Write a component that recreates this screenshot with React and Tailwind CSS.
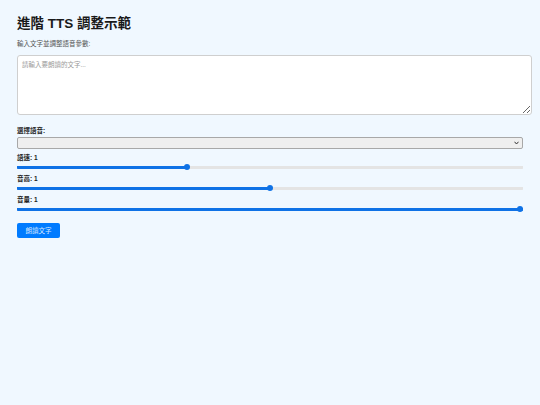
import React, { useState } from "react";

// Slider row: label + styled range input
const Slider = ({ label, value, min, max, step, onChange }) => {
  const pct = ((value - min) / (max - min)) * 100;
  return (
    <>
      <label className="mt-[4px] block text-[6.5px] font-bold leading-[10px] text-[#222]">
        {label}: {value}
      </label>
      <input
        type="range"
        min={min}
        max={max}
        step={step}
        value={value}
        onChange={(e) => onChange(Number(e.target.value))}
        className="mt-[1px] block h-[6px] w-[506px] cursor-pointer appearance-none bg-transparent [&::-webkit-slider-runnable-track]:h-[3px] [&::-webkit-slider-runnable-track]:rounded-full [&::-webkit-slider-thumb]:mt-[-1.5px] [&::-webkit-slider-thumb]:h-[6px] [&::-webkit-slider-thumb]:w-[6px] [&::-webkit-slider-thumb]:appearance-none [&::-webkit-slider-thumb]:rounded-full [&::-webkit-slider-thumb]:bg-[#0f72e6]"
        style={{
          background: `linear-gradient(to right, #0f72e6 0%, #0f72e6 ${pct}%, #e4e4e4 ${pct}%, #e4e4e4 100%)`,
          backgroundSize: "100% 3px",
          backgroundPosition: "center",
          backgroundRepeat: "no-repeat",
          borderRadius: "2px",
        }}
      />
    </>
  );
};

const App = () => {
  const [text, setText] = useState("");
  const [rate, setRate] = useState(1);
  const [pitch, setPitch] = useState(1);
  const [volume, setVolume] = useState(1);

  return (
    <div className="min-h-screen bg-[#f0f8ff] px-[17px] pt-[14px] font-['Liberation_Sans','Noto_Sans_CJK_TC',sans-serif]">
      <h1 className="text-[13.5px] font-bold leading-[20px] text-[#1a1a1a]">進階 TTS 調整示範</h1>
      <p className="mt-[5px] text-[6.5px] leading-[10px] text-[#555]">輸入文字並調整語音參數:</p>

      <textarea
        value={text}
        onChange={(e) => setText(e.target.value)}
        placeholder="請輸入要朗讀的文字..."
        className="mt-[6px] block h-[60px] w-[515px] resize-y rounded-[3px] border border-[#cfcfcf] bg-white px-[4px] py-[4px] text-[6.5px] leading-[9px] placeholder:text-[#9a9a9a] focus:outline-none"
      />

      <label className="mt-[11px] block text-[6.5px] font-bold leading-[10px] text-[#222]">選擇語音:</label>
      <div className="relative mt-[1px] w-[506px]">
        <select className="block h-[12px] w-full appearance-none rounded-[2px] border border-[#a8a8a8] bg-[#efefef] text-[6.5px]" />
        <svg className="pointer-events-none absolute right-[4px] top-[4px] h-[4px] w-[5px]" viewBox="0 0 10 8">
          <path d="M1 1.5 L5 6 L9 1.5" fill="none" stroke="#333" strokeWidth="2" />
        </svg>
      </div>

      <Slider label="語速" value={rate} min={0.5} max={2} step={0.1} onChange={setRate} />
      <Slider label="音高" value={pitch} min={0} max={2} step={0.1} onChange={setPitch} />
      <Slider label="音量" value={volume} min={0} max={1} step={0.1} onChange={setVolume} />

      <button className="mt-[11px] h-[15px] w-[43px] rounded-[2px] bg-[#007bff] text-[6.5px] text-[#d6e8ff]">
        朗讀文字
      </button>
    </div>
  );
};

export default App;
